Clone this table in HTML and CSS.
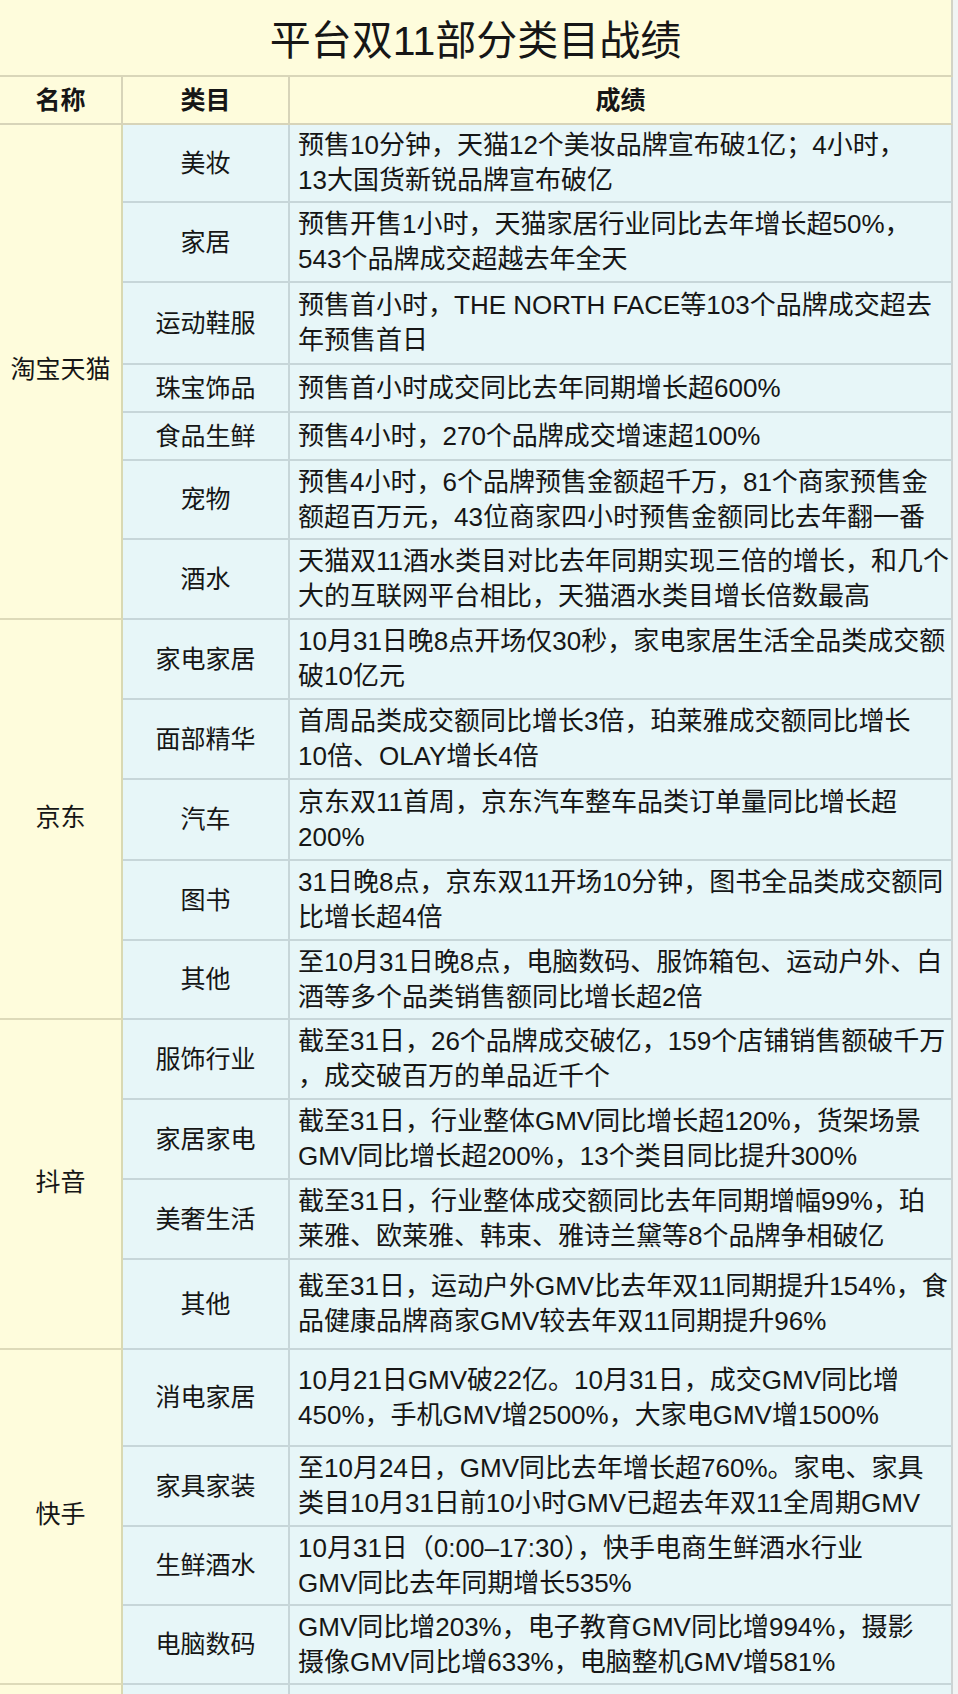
FILE: index.html
```html
<!DOCTYPE html>
<html lang="zh-CN">
<head>
<meta charset="utf-8">
<title>平台双11部分类目战绩</title>
<link rel="stylesheet" href="styles.css">
</head>
<body>
<div class="sheet">
  <div class="title">平台双11部分类目战绩</div>
  <div class="grid">
    <div class="hd">名称</div>
    <div class="hd">类目</div>
    <div class="hd last">成绩</div>

    <div class="grp span7">淘宝天猫</div>
    <div class="cat">美妆</div>
    <div class="res">预售10分钟，天猫12个美妆品牌宣布破1亿；4小时，<br>13大国货新锐品牌宣布破亿</div>
    <div class="cat">家居</div>
    <div class="res">预售开售1小时，天猫家居行业同比去年增长超50%，<br>543个品牌成交超越去年全天</div>
    <div class="cat">运动鞋服</div>
    <div class="res">预售首小时，THE NORTH FACE等103个品牌成交超去<br>年预售首日</div>
    <div class="cat">珠宝饰品</div>
    <div class="res">预售首小时成交同比去年同期增长超600%</div>
    <div class="cat">食品生鲜</div>
    <div class="res">预售4小时，270个品牌成交增速超100%</div>
    <div class="cat">宠物</div>
    <div class="res">预售4小时，6个品牌预售金额超千万，81个商家预售金<br>额超百万元，43位商家四小时预售金额同比去年翻一番</div>
    <div class="cat">酒水</div>
    <div class="res">天猫双11酒水类目对比去年同期实现三倍的增长，和几个<br>大的互联网平台相比，天猫酒水类目增长倍数最高</div>

    <div class="grp span5">京东</div>
    <div class="cat">家电家居</div>
    <div class="res">10月31日晚8点开场仅30秒，家电家居生活全品类成交额<br>破10亿元</div>
    <div class="cat">面部精华</div>
    <div class="res">首周品类成交额同比增长3倍，珀莱雅成交额同比增长<br>10倍、OLAY增长4倍</div>
    <div class="cat">汽车</div>
    <div class="res">京东双11首周，京东汽车整车品类订单量同比增长超<br>200%</div>
    <div class="cat">图书</div>
    <div class="res">31日晚8点，京东双11开场10分钟，图书全品类成交额同<br>比增长超4倍</div>
    <div class="cat">其他</div>
    <div class="res">至10月31日晚8点，电脑数码、服饰箱包、运动户外、白<br>酒等多个品类销售额同比增长超2倍</div>

    <div class="grp span4">抖音</div>
    <div class="cat">服饰行业</div>
    <div class="res">截至31日，26个品牌成交破亿，159个店铺销售额破千万<br>，成交破百万的单品近千个</div>
    <div class="cat">家居家电</div>
    <div class="res">截至31日，行业整体GMV同比增长超120%，货架场景<br>GMV同比增长超200%，13个类目同比提升300%</div>
    <div class="cat">美奢生活</div>
    <div class="res">截至31日，行业整体成交额同比去年同期增幅99%，珀<br>莱雅、欧莱雅、韩束、雅诗兰黛等8个品牌争相破亿</div>
    <div class="cat">其他</div>
    <div class="res">截至31日，运动户外GMV比去年双11同期提升154%，食<br>品健康品牌商家GMV较去年双11同期提升96%</div>

    <div class="grp span4">快手</div>
    <div class="cat">消电家居</div>
    <div class="res">10月21日GMV破22亿。10月31日，成交GMV同比增<br>450%，手机GMV增2500%，大家电GMV增1500%</div>
    <div class="cat">家具家装</div>
    <div class="res">至10月24日，GMV同比去年增长超760%。家电、家具<br>类目10月31日前10小时GMV已超去年双11全周期GMV</div>
    <div class="cat">生鲜酒水</div>
    <div class="res">10月31日（0:00–17:30），快手电商生鲜酒水行业<br>GMV同比去年同期增长535%</div>
    <div class="cat">电脑数码</div>
    <div class="res">GMV同比增203%，电子教育GMV同比增994%，摄影<br>摄像GMV同比增633%，电脑整机GMV增581%</div>

    <div class="grp"></div>
    <div class="cat"></div>
    <div class="res"></div>
  </div>
</div>
</body>
</html>
```
FILE: styles.css
```css
html, body {
  margin: 0;
  padding: 0;
}
body {
  background: #f1f4f4;
  width: 958px;
  height: 1694px;
  overflow: hidden;
  font-family: "Liberation Sans", "Noto Sans CJK SC", sans-serif;
  color: #161616;
}
.sheet {
  width: 953px;
}
.title {
  box-sizing: border-box;
  height: 77px;
  background: #fefcdc;
  border-bottom: 2px solid #d9d6b9;
  border-right: 2px solid #d2d3c6;
  display: flex;
  align-items: center;
  justify-content: center;
  font-size: 41px;
  font-weight: 400;
  padding-bottom: 1px;
}
.grid {
  display: grid;
  grid-template-columns: 123px 167px 663px;
  grid-template-rows: 48px 78px 80px 82px 48px 48px 79px 80px 80px 80px 81px 80px 79px 80px 80px 80px 90px 97px 80px 79px 79px 40px;
}
.grid > div {
  box-sizing: border-box;
  border-right: 2px solid #c7d6d9;
  border-bottom: 2px solid #c7d6d9;
  font-size: 25px;
  line-height: 35px;
  display: flex;
  align-items: center;
  white-space: nowrap;
}
.grid > .hd {
  background: #fefcdc;
  border-right-color: #d7d4b9;
  border-bottom-color: #d7d4b9;
  font-weight: 700;
  justify-content: center;
}
.grid > .hd.last,
.grid > .res {
  border-right-color: #cdd3d3;
}
.grid > .grp {
  background: #fefcdc;
  border-right-color: #d9d9b3;
  border-bottom-color: #dddab9;
  justify-content: center;
  padding-bottom: 4px;
}
.grid > .cat {
  background: #e7f6f8;
  justify-content: center;
}
.grid > .res {
  background: #e7f6f8;
  padding-left: 8px;
  font-size: 26px;
}
.span7 { grid-row: span 7; }
.span5 { grid-row: span 5; }
.span4 { grid-row: span 4; }
```
